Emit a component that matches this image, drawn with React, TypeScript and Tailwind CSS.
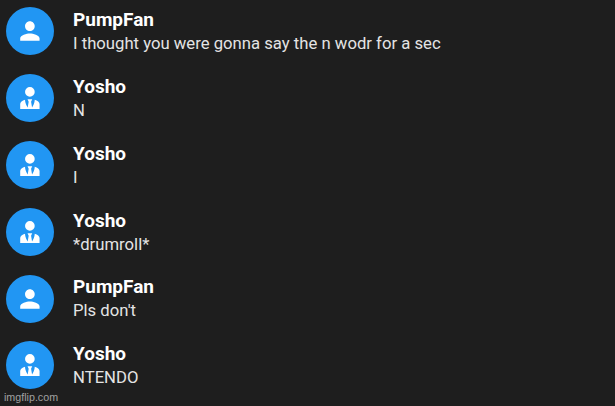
import React from 'react';

interface Message {
  author: string;
  text: string;
}

const messages: Message[] = [
  { author: 'PumpFan', text: 'I thought you were gonna say the n wodr for a sec' },
  { author: 'Yosho', text: 'N' },
  { author: 'Yosho', text: 'I' },
  { author: 'Yosho', text: '*drumroll*' },
  { author: 'PumpFan', text: "Pls don't" },
  { author: 'Yosho', text: 'NTENDO' },
];

const PersonIcon: React.FC = () => (
  <svg viewBox="-0.3 -0.4 24.8 24.8" className="w-[30px] h-[30px]" fill="white">
    <path d="M12 12c2.21 0 4-1.79 4-4s-1.79-4-4-4-4 1.79-4 4 1.79 4 4 4zm0 2c-2.67 0-8 1.34-8 4v2h16v-2c0-2.66-5.33-4-8-4z" />
  </svg>
);

const TieIcon: React.FC = () => (
  <svg viewBox="-0.3 -0.4 24.8 24.8" className="w-[30px] h-[30px]" fill="white">
    <path d="M12 3a4 4 0 0 1 4 4 4 4 0 0 1-4 4 4 4 0 0 1-4-4 4 4 0 0 1 4-4m4 10.54c0 1.06-.28 3.53-2.19 6.29L13 15l.94-1.88c-.62-.07-1.27-.12-1.94-.12s-1.32.05-1.94.12L11 15l-.81 4.83C8.28 17.07 8 14.6 8 13.54c-2.39.7-4 1.96-4 3.46v4h16v-4c0-1.5-1.6-2.76-4-3.46z" />
  </svg>
);

const MessageRow: React.FC<{ message: Message }> = ({ message }) => (
  <div className="flex h-[66.9px] shrink-0 pl-[6px] pt-[7px]">
    <div className="w-12 h-12 rounded-full bg-[#2196f3] flex items-center justify-center">
      {message.author === 'PumpFan' ? <PersonIcon /> : <TieIcon />}
    </div>
    <div className="ml-[19px] pt-[0.9px]">
      <div className="text-[19px] leading-6 font-bold text-white">{message.author}</div>
      <div className="text-[16.7px] leading-[23.6px] text-[#e4e4e4]">{message.text}</div>
    </div>
  </div>
);

const App: React.FC = () => (
  <div className="relative w-[615px] h-[406px] overflow-hidden bg-[#1e1e1e] font-[Roboto,sans-serif]">
    {messages.map((message, i) => (
      <MessageRow key={i} message={message} />
    ))}
    <span className="absolute left-1 bottom-px font-['Liberation_Sans',sans-serif] text-[10.7px] leading-4 text-[#a0a0a0]">
      imgflip.com
    </span>
  </div>
);

export default App;
